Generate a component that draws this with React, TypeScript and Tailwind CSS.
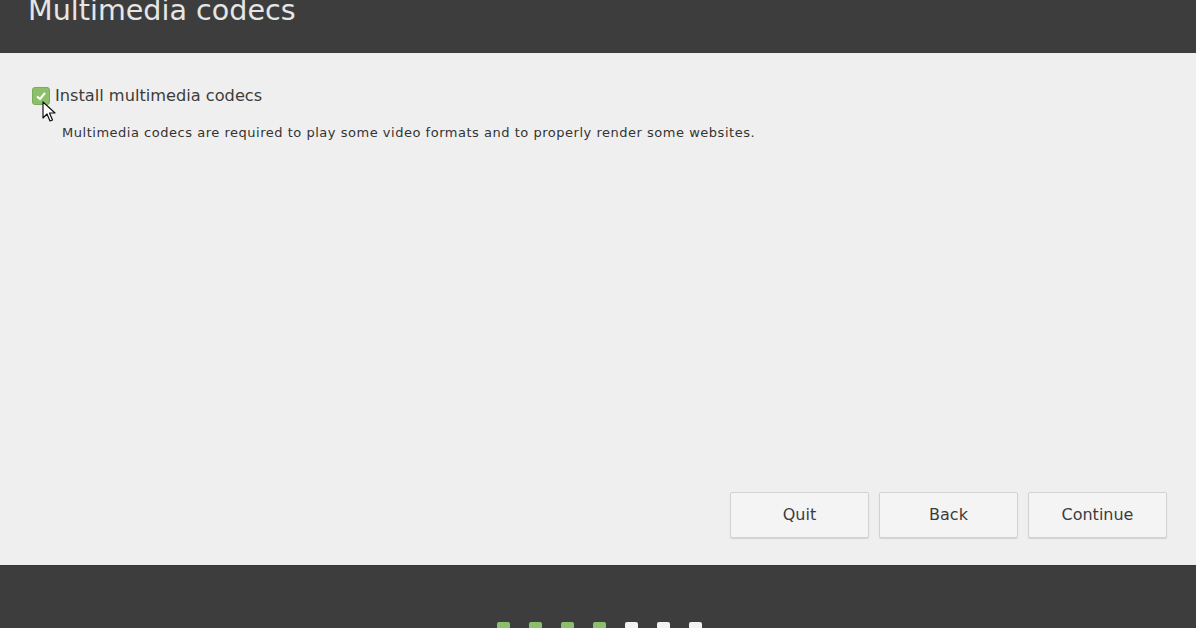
import React from "react";

export default function App() {
  const font = { fontFamily: '"DejaVu Sans", "Noto Sans", sans-serif' };
  return (
    <div className="w-[1196px] h-[628px] overflow-hidden flex flex-col bg-[#efefef] relative" style={font}>
      <div className="h-[53px] bg-[#3d3d3d] shrink-0 px-[28px] overflow-hidden">
        <div className="text-[28.6px] leading-none text-[#e6e6e6] -mt-[4px]">Multimedia codecs</div>
      </div>
      <div className="flex-1 flex flex-col px-[32px] pt-[31px] pb-[27px]">
        <div className="flex items-center gap-[5px]">
          <div className="w-[18px] h-[18px] rounded-[3px] bg-[#8cbf6a] border border-[#7aab5a] flex items-center justify-center">
            <svg width="12" height="12" viewBox="0 0 12 12">
              <path d="M2 6.5 L5 9 L10 3" stroke="#ffffff" strokeWidth="2" fill="none" />
            </svg>
          </div>
          <span className="text-[16.2px] text-[#3c3c3c]">Install multimedia codecs</span>
        </div>
        <div className="pl-[30px] mt-[17px] text-[13px] leading-[16px] tracking-[0.52px] text-[#333333]">
          Multimedia codecs are required to play some video formats and to properly render some websites.
        </div>
        <div className="flex-1" />
        <div className="flex justify-end gap-[10px] mr-[-3px]">
          {["Quit", "Back", "Continue"].map((t) => (
            <button
              key={t}
              className="w-[139px] h-[46px] bg-[#f4f4f4] border border-[#d2d2d2] rounded-[2px] shadow-[0_1px_1px_rgba(0,0,0,0.12)] text-[16px] text-[#3c3c3c]"
            >
              {t}
            </button>
          ))}
        </div>
      </div>
      <div className="h-[63px] bg-[#3d3d3d] shrink-0 border-t border-[#353535] flex justify-center pt-[56px]">
        <div className="flex gap-[19px] ml-[2px]">
          {[1, 1, 1, 1, 0, 0, 0].map((g, i) => (
            <div key={i} className={"w-[13px] h-[13px] rounded-[2px] " + (g ? "bg-[#8cbf6a]" : "bg-[#f2f2f2]")} />
          ))}
        </div>
      </div>
      <svg className="absolute left-[42px] top-[101px]" width="14" height="22" viewBox="0 0 14 22">
        <path d="M1 1 L1 17 L5 13 L8 20 L10.5 19 L7.5 12 L13 12 Z" fill="#ffffff" stroke="#111111" strokeWidth="1.2" strokeLinejoin="round" />
      </svg>
    </div>
  );
}
